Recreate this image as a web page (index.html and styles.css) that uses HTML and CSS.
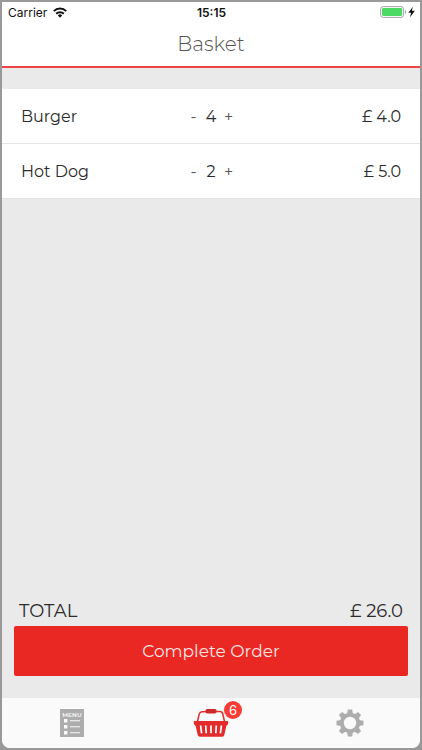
FILE: index.html
```html
<!DOCTYPE html>
<html lang="en">
<head>
  <meta charset="utf-8">
  <meta name="viewport" content="width=device-width, initial-scale=1">
  <title>Basket</title>
  <link rel="stylesheet" href="styles.css">
</head>
<body>
  <div class="screen">
    <header class="header">
      <div class="status">
        <div class="status-left">
          <span>Carrier</span>
          <svg width="14" height="11" viewBox="0 0 14 11" aria-hidden="true">
            <g fill="none" stroke="#111" stroke-width="2">
              <path d="M.8 4.1a8.8 8.8 0 0 1 12.4 0"/>
              <path d="M3.2 6.7a5.4 5.4 0 0 1 7.6 0"/>
            </g>
            <path d="M4.9 8.4a3 3 0 0 1 4.2 0L7 10.7z" fill="#111"/>
          </svg>
        </div>
        <time class="clock">15:15</time>
        <div class="status-right">
          <svg width="35" height="12" viewBox="0 0 35 12" aria-hidden="true">
            <rect x=".6" y=".6" width="23" height="10.8" rx="2.6" fill="#fff" stroke="#a3a3a3"/>
            <rect x="2" y="2" width="20.2" height="8" rx="1.4" fill="#4cd964"/>
            <path d="M25 4c1.6.5 1.6 3.5 0 4z" fill="#a3a3a3"/>
            <path d="M32.8.8 28.4 6.8h2.7L30 11.200l4.900-6.400h-3z" fill="#111"/>
          </svg>
        </div>
      </div>
      <h1 class="title">Basket</h1>
    </header>

    <main class="content">
      <ul class="items">
        <li class="item">
          <span>Burger</span>
          <div class="stepper">
            <button type="button" class="step" aria-label="Remove one Burger">-</button>
            <span class="count">4</span>
            <button type="button" class="step" aria-label="Add one Burger">+</button>
          </div>
          <span class="price">£ 4.0</span>
        </li>
        <li class="item">
          <span>Hot Dog</span>
          <div class="stepper">
            <button type="button" class="step" aria-label="Remove one Hot Dog">-</button>
            <span class="count">2</span>
            <button type="button" class="step" aria-label="Add one Hot Dog">+</button>
          </div>
          <span class="price">£ 5.0</span>
        </li>
      </ul>
      <section class="checkout">
        <div class="total"><span>TOTAL</span><span>£ 26.0</span></div>
        <button type="button" class="complete">Complete Order</button>
      </section>
    </main>

    <nav class="tabs">
      <a class="tab" href="#menu" aria-label="Menu">
        <svg width="24" height="28" viewBox="0 0 24 28" aria-hidden="true">
          <path d="M0 0h24v28H0z" fill="#adadad"/>
          <text class="menu-word" x="12" y="8" text-anchor="middle">MENU</text>
          <g fill="#fafafa">
            <path d="M4 10h3.4v3.4H4zM4 16h3.4v3.4H4zM4 22h3.4v3.4H4z"/>
            <path d="M10 11.2h10v1.1H10zM10 17.2h10v1.1H10zM10 23.2h10v1.1H10z"/>
          </g>
        </svg>
      </a>
      <a class="tab" href="#basket" aria-label="Basket, 6 items">
        <span class="basket">
          <svg width="36" height="28" viewBox="0 0 36 28" aria-hidden="true">
            <path d="M4.4 13 6.2 5.2Q6.8 2.9 9 2.8l18-.2q2.2 0 2.8 2.4L31.600 13" fill="none" stroke="#e32b2b" stroke-width="1.500"/>
            <rect x="12.500" y="0" width="11" height="4.600" rx="1.800" fill="#cf2828"/>
            <path d="M1.800 12h32.400q1.400 0 1.100 1.400l-.5 1.900q-.3 1.200-1.400 1.400l-2.100 9.300q-.4 1.800-2.200 1.800H6.900q-1.800 0-2.200-1.800L2.600 16.700q-1.100-.2-1.400-1.400l-.5-1.900Q.4 12 1.800 12z" fill="#e32b2b"/>
            <path d="m7.600 16.500 1 7.800M12.700 16.500l.5 7.800M18 16.500v7.800M23.300 16.500l-.5 7.800M28.400 16.500l-1 7.800" stroke="#fff" stroke-width="1.700"/>
          </svg>
          <span class="badge">6</span>
        </span>
      </a>
      <a class="tab" href="#settings" aria-label="Settings">
        <svg width="28" height="28" viewBox="-14 -14 28 28" aria-hidden="true">
          <g fill="#adadad">
            <path id="teeth" d="M-2.900-9-2.200-13.500H2.200L2.900-9V9L2.200 13.500H-2.200L-2.900 9z"/>
            <use href="#teeth" transform="rotate(45)"/>
            <use href="#teeth" transform="rotate(90)"/>
            <use href="#teeth" transform="rotate(135)"/>
            <circle r="10.200"/>
          </g>
          <circle r="6.200" fill="#fafafa"/>
        </svg>
      </a>
    </nav>
  </div>
</body>
</html>
```
FILE: styles.css
```css
* {
  box-sizing: border-box;
}

body {
  margin: 0;
  min-height: 100vh;
  padding: 2px;
  display: flex;
  background: #999;
  color: #2b2b2b;
  font-family: Montserrat, Inter, sans-serif;
}

button {
  border: 0;
  padding: 0;
  background: none;
  font-family: inherit;
  cursor: pointer;
}

.screen {
  flex: 1;
  display: flex;
  flex-direction: column;
  background: #eaeaea;
  border-radius: 0 0 8px 8px;
  overflow: hidden;
}

.header {
  background: #fff;
  border-bottom: 2px solid #e44;
}

.status {
  display: grid;
  grid-template-columns: 1fr auto 1fr;
  align-items: center;
  height: 20px;
  padding: 0 5px 0 6px;
  color: #111;
  font-family: Inter, sans-serif;
  font-size: 12px;
}

.status-left {
  display: flex;
  align-items: center;
  gap: 6px;
}

.status-right {
  display: flex;
  justify-content: flex-end;
}

.clock {
  font-weight: 600;
}

.title {
  margin: 0;
  font-size: 20px;
  line-height: 44px;
  font-weight: 300;
  text-align: center;
  color: #555;
}

.content {
  flex: 1;
  display: flex;
  flex-direction: column;
  justify-content: space-between;
  padding: 21px 0 22px;
}

.items {
  list-style: none;
  margin: 0;
  padding: 0;
}

.item {
  display: grid;
  grid-template-columns: 1fr auto 1fr;
  align-items: center;
  height: 55px;
  padding: 0 19px;
  background: #fff;
  border-bottom: 1px solid #e4e4e4;
  font-size: 16px;
}

.stepper {
  display: flex;
  align-items: center;
  gap: 6px;
}

.step {
  width: 12px;
  height: 24px;
  font-size: 16px;
  color: #555;
}

.count {
  min-width: 11px;
  text-align: center;
}

.price {
  text-align: right;
}

.checkout {
  padding: 0 12px;
}

.total {
  display: flex;
  justify-content: space-between;
  padding: 0 5px;
  font-size: 18px;
  line-height: 30px;
}

.complete {
  display: block;
  width: 100%;
  height: 50px;
  border-radius: 2px;
  background: #e92823;
  color: #ffe4e2;
  font-size: 17px;
}

.tabs {
  display: grid;
  grid-template-columns: repeat(3, 1fr);
  height: 50px;
  background: #fafafa;
}

.tab {
  display: flex;
  align-items: center;
  justify-content: center;
  text-decoration: none;
}

.menu-word {
  fill: #fafafa;
  font-family: Montserrat, Inter, sans-serif;
  font-size: 6px;
  font-weight: 600;
}

.basket {
  position: relative;
  display: flex;
}

.badge {
  position: absolute;
  top: -8px;
  right: -13px;
  width: 18px;
  height: 18px;
  border-radius: 50%;
  background: #fc3d35;
  color: #fff;
  font-family: Inter, sans-serif;
  font-size: 13px;
  line-height: 18px;
  text-align: center;
}
```
